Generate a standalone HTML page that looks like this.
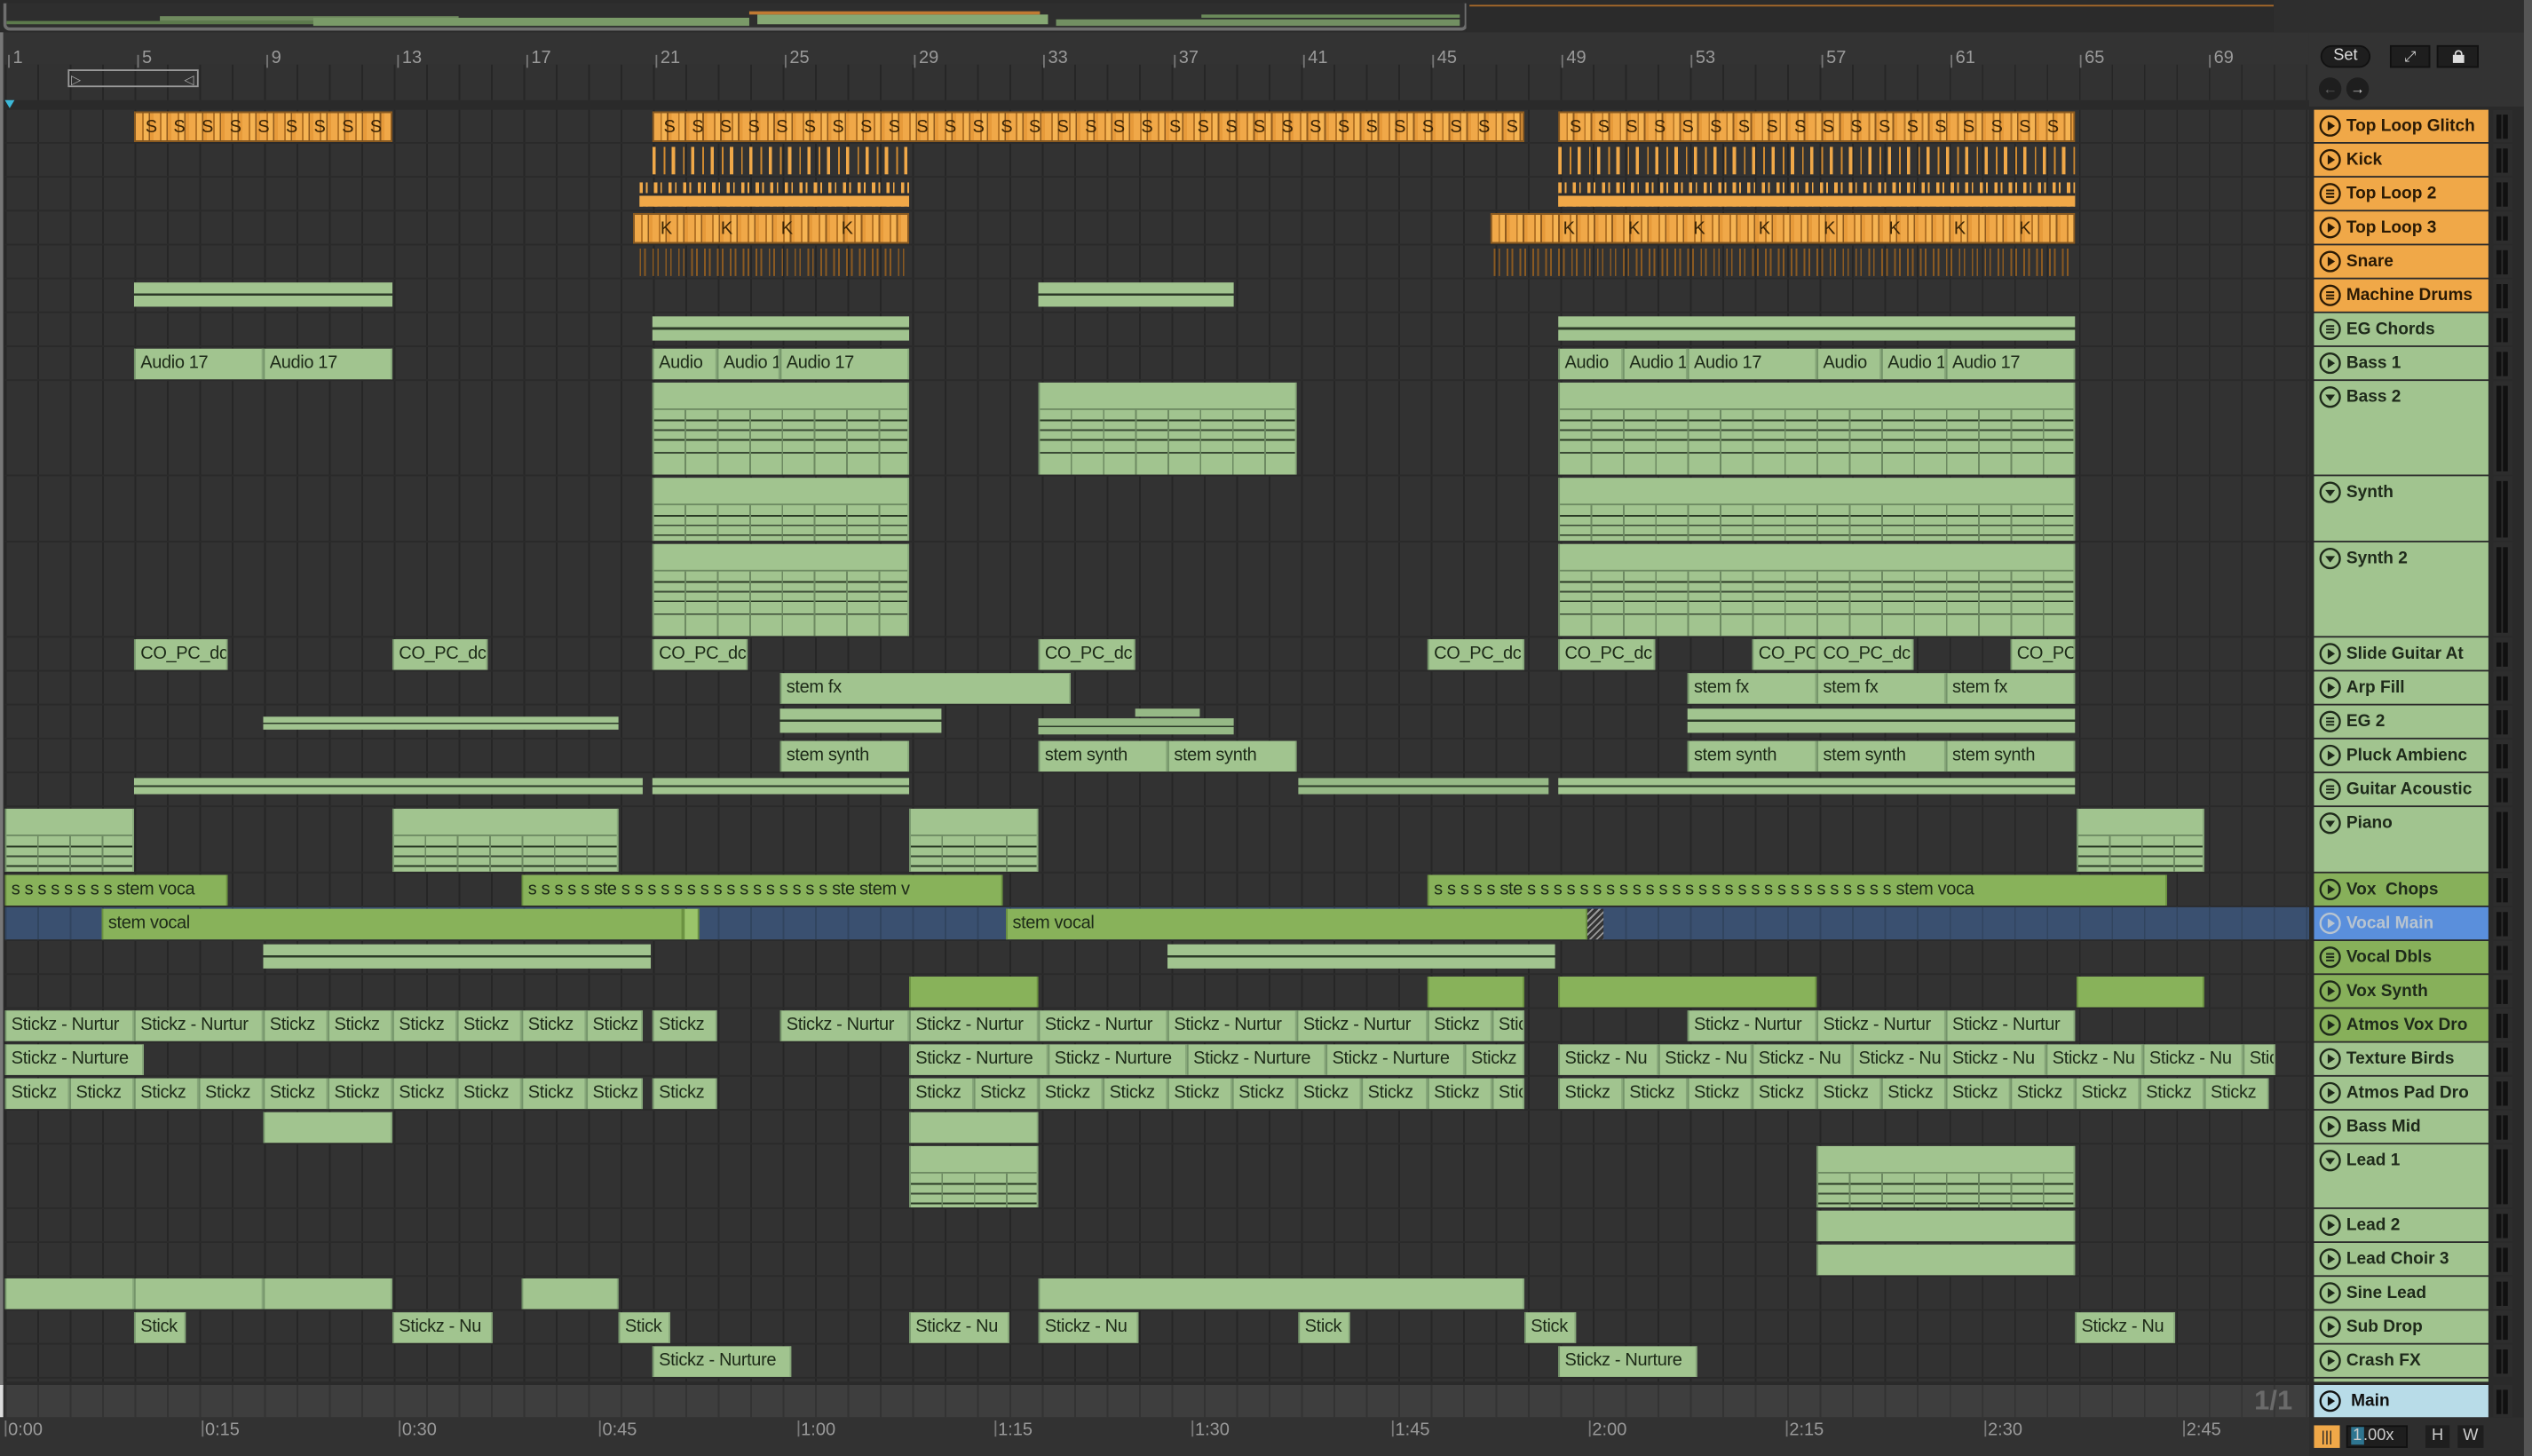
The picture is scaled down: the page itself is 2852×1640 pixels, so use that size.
<!DOCTYPE html>
<html><head><meta charset="utf-8"><style>
*{margin:0;padding:0;box-sizing:border-box}
html,body{width:2852px;height:1640px;overflow:hidden;background:#232323}
.s{position:absolute;left:0;top:0;width:1568px;height:902px;transform:scale(1.81888,1.81818);transform-origin:0 0;font-family:"Liberation Sans",sans-serif;background:#2a2a2a}
.r{position:absolute;left:3px;width:1427px;background-color:#323232;background-image:repeating-linear-gradient(90deg,#262626 0 1px,transparent 1px 20.07px)}
.c{position:absolute;top:1px;bottom:0;background:#a1c48f;border-left:1px solid #74946a;border-right:1px solid #87a77a;color:#1d2a18;font-size:11px;line-height:18px;padding-left:3px;white-space:nowrap;overflow:hidden;font-family:"Liberation Sans",sans-serif;letter-spacing:-.2px}
.b{background:#88b25a;border-color:#6a9040}
.st{top:2px;bottom:auto;height:15px;background:linear-gradient(#a1c48f 0 45%,#2c3a28 45% 55%,#a1c48f 55%);border:none}
.st2{background:linear-gradient(#96b986 0 45%,#2c3a28 45% 55%,#96b986 55%)}
.o{background:repeating-linear-gradient(90deg,#f0a848 0 4px,#b57426 4px 5px,#f5b352 5px 8px,#8e5a1e 8px 9px,#e69a3a 9px 11px);border:1px solid #8a5a20;color:#3a2406;font-size:11px;letter-spacing:3.5px;padding-left:6px}
.k{top:2px;bottom:1px;background:repeating-linear-gradient(90deg,#f0a848 0 2px,transparent 2px 7px,#d08a30 7px 8px,transparent 8px 12px);border:none}
.tl2{top:3px;bottom:auto;height:15px;background:linear-gradient(transparent 0 45%,#2c2c2c 45% 55%,#f0a848 55% 100%),repeating-linear-gradient(90deg,#f0a848 0 2px,transparent 2px 4px,#f0a848 4px 5px,transparent 5px 9px);border:none}
.sn{top:2px;bottom:1px;background:repeating-linear-gradient(90deg,#8a5a22 0 1px,transparent 1px 3px,#8a5a22 3px 4px,transparent 4px 8px);border:none}
.md{background:#a1c48f}
.md:after{content:"";position:absolute;left:0;right:0;top:16px;bottom:0;border-top:1px solid #6d8a62;background:repeating-linear-gradient(90deg,transparent 0 19px,#6d8a62 19px 20px),linear-gradient(transparent 6px,#2a3a25 6px 7px,transparent 7px 12px,#3a4a35 12px 13px,transparent 13px 18px,#2a3a25 18px 19px,transparent 19px 26px,#3a4a35 26px 27px,transparent 27px)}
.h{position:absolute;left:1430px;width:108px;top:0;bottom:0;background:#a1c48f;color:#1e2a1a;font-weight:bold;font-size:10.5px;line-height:20px;padding-left:20px;white-space:nowrap;overflow:hidden;font-family:"Liberation Sans",sans-serif}
.h.o2{background:#f0a848;color:#2a1a05}
.h.b2{background:#87b05a}
.h svg{position:absolute;left:3px;top:3px;width:14px;height:14px}
.m{position:absolute;left:1541px;width:12px;top:0;bottom:0;background:#2d2d2d}
.m:before,.m:after{content:"";position:absolute;top:3px;bottom:2px;width:3px;background:#111;left:2px}
.m:after{left:6px}
.gap{position:absolute;left:1427px;width:3px;top:0;bottom:0;background:#2a2a2a}
.tk{position:absolute;top:30px;font-size:11px;color:#9a9a9a}
.tk:before{content:"";position:absolute;left:-3px;top:4px;width:1px;height:8px;background:#777}
.tm{position:absolute;top:880px;font-size:11px;color:#999}
.tm:before{content:"";position:absolute;left:-2px;top:0;width:1px;height:10px;background:#777}
</style></head><body><div class="s">
<svg width="0" height="0" style="position:absolute"><defs>
<g id="pl"><circle cx="7" cy="7" r="6" fill="none" stroke="currentColor" stroke-width="1.3"/><path d="M5.5 4 L10 7 L5.5 10 Z" fill="currentColor"/></g>
<g id="ls"><circle cx="7" cy="7" r="6" fill="none" stroke="currentColor" stroke-width="1.3"/><path d="M4.5 5h5M4.5 7h5M4.5 9h5" stroke="currentColor" stroke-width="1.1"/></g>
<g id="dn"><circle cx="7" cy="7" r="6" fill="none" stroke="currentColor" stroke-width="1.3"/><path d="M4 5.5 L10 5.5 L7 9.5 Z" fill="currentColor"/></g>
</defs></svg>

<!-- overview -->
<div style="position:absolute;left:0;top:0;width:1568px;height:20px;background:#2b2b2b"></div>
<div style="position:absolute;left:2px;top:2px;width:907px;height:17px;border:2px solid #6e6e6e;border-top:none;border-radius:0 0 4px 4px;background:#2e2e2e;overflow:hidden">
<div style="position:absolute;left:95px;top:8px;width:185px;height:3px;background:#6f8a5e"></div>
<div style="position:absolute;left:0;top:11px;width:460px;height:2px;background:#5c7a4c"></div>
<div style="position:absolute;left:190px;top:9px;width:270px;height:5px;background:#7a9a68"></div>
<div style="position:absolute;left:465px;top:7px;width:180px;height:6px;background:#86a874"></div>
<div style="position:absolute;left:460px;top:5px;width:180px;height:2px;background:#c07a32"></div>
<div style="position:absolute;left:650px;top:10px;width:250px;height:4px;background:#728f62"></div>
<div style="position:absolute;left:740px;top:7px;width:160px;height:2px;background:#6b8a5a"></div>
</div>
<div style="position:absolute;left:908px;top:0;width:660px;height:20px;background:#2b2b2b"></div>
<div style="position:absolute;left:910px;top:3px;width:520px;height:1px;background:#a86a2a"></div>
<div style="position:absolute;left:1408px;top:0;width:160px;height:20px;background:#2e2e2e;border-top-right-radius:5px;border-right:3px solid #555"></div>

<!-- ruler -->
<div style="position:absolute;left:2px;top:20px;width:1428px;height:42px;background:#333"></div>
<div style="position:absolute;left:3px;top:40px;width:1427px;height:22px;background-color:#323232;background-image:repeating-linear-gradient(90deg,#262626 0 1px,transparent 1px 20.07px)"></div>
<div class="tk" style="left:8px">1</div><div class="tk" style="left:88px">5</div><div class="tk" style="left:168px">9</div><div class="tk" style="left:249px">13</div><div class="tk" style="left:329px">17</div><div class="tk" style="left:409px">21</div><div class="tk" style="left:489px">25</div><div class="tk" style="left:569px">29</div><div class="tk" style="left:649px">33</div><div class="tk" style="left:730px">37</div><div class="tk" style="left:810px">41</div><div class="tk" style="left:890px">45</div><div class="tk" style="left:970px">49</div><div class="tk" style="left:1050px">53</div><div class="tk" style="left:1131px">57</div><div class="tk" style="left:1211px">61</div><div class="tk" style="left:1291px">65</div><div class="tk" style="left:1371px">69</div>
<div style="position:absolute;left:42px;top:43px;width:81px;height:11px;border:1px solid #9a9a9a"></div>
<div style="position:absolute;left:44px;top:45px;font-size:8px;color:#aaa">▷</div><div style="position:absolute;left:114px;top:45px;font-size:8px;color:#aaa">◁</div>
<div style="position:absolute;left:3px;top:62px;width:0;height:0;border-left:3px solid transparent;border-right:3px solid transparent;border-top:5px solid #3cb8d8"></div>
<!-- right panel top -->
<div style="position:absolute;left:1430px;top:20px;width:138px;height:46px;background:#333"></div>
<div style="position:absolute;left:1437px;top:28px;width:31px;height:14px;border-radius:7px;background:#1e1e1e;border:1px solid #111;color:#ddd;font-size:10px;text-align:center;line-height:12px">Set</div>
<div style="position:absolute;left:1480px;top:28px;width:25px;height:14px;background:#1e1e1e;border:1px solid #111;color:#ddd;font-size:9px;text-align:center;line-height:12px">⤢</div>
<div style="position:absolute;left:1509px;top:28px;width:26px;height:14px;background:#1e1e1e;border:1px solid #111"><div style="position:absolute;left:9px;top:5px;width:7px;height:5px;background:#ddd"></div><div style="position:absolute;left:10px;top:2px;width:5px;height:5px;border:1px solid #ddd;border-bottom:none;border-radius:3px 3px 0 0"></div></div>
<div style="position:absolute;left:1436px;top:48px;width:14px;height:14px;border-radius:7px;background:#1e1e1e;color:#666;font-size:9px;text-align:center;line-height:14px">←</div>
<div style="position:absolute;left:1453px;top:48px;width:14px;height:14px;border-radius:7px;background:#1e1e1e;color:#ddd;font-size:9px;text-align:center;line-height:14px">→</div>
<div style="position:absolute;left:0;top:20px;width:2px;height:840px;background:#777"></div>

<!-- rows -->
<div class="r" style="top:68px;height:20px"><div class="c o" style="left:80px;width:160px">S S S S S S S S S S S</div><div class="c o" style="left:401px;width:540px">S S S S S S S S S S S S S S S S S S S S S S S S S S S S S S S S S S S S S</div><div class="c o" style="left:962px;width:320px">S S S S S S S S S S S S S S S S S S S S S S</div><div class="gap"></div><div class="h o2"><svg style="color:#2a1a05"><use href="#pl"/></svg>Top Loop Glitch</div><div class="m"></div></div>
<div class="r" style="top:89px;height:20px"><div class="c k" style="left:401px;width:159px"></div><div class="c k" style="left:962px;width:320px"></div><div class="gap"></div><div class="h o2"><svg style="color:#2a1a05"><use href="#pl"/></svg>Kick</div><div class="m"></div></div>
<div class="r" style="top:110px;height:20px"><div class="c tl2" style="left:393px;width:167px"></div><div class="c tl2" style="left:962px;width:320px"></div><div class="gap"></div><div class="h o2"><svg style="color:#2a1a05"><use href="#ls"/></svg>Top Loop 2</div><div class="m"></div></div>
<div class="r" style="top:131px;height:20px"><div class="c o" style="left:389px;width:171px;letter-spacing:30px;padding-left:16px">KKKK</div><div class="c o" style="left:920px;width:362px;letter-spacing:33px;padding-left:44px">KKKKKKKK</div><div class="gap"></div><div class="h o2"><svg style="color:#2a1a05"><use href="#pl"/></svg>Top Loop 3</div><div class="m"></div></div>
<div class="r" style="top:152px;height:20px"><div class="c sn" style="left:393px;width:167px"></div><div class="c sn" style="left:922px;width:360px"></div><div class="gap"></div><div class="h o2"><svg style="color:#2a1a05"><use href="#pl"/></svg>Snare</div><div class="m"></div></div>
<div class="r" style="top:173px;height:20px"><div class="c st" style="left:80px;width:160px"></div><div class="c st" style="left:640px;width:121px"></div><div class="gap"></div><div class="h o2"><svg style="color:#2a1a05"><use href="#ls"/></svg>Machine Drums</div><div class="m"></div></div>
<div class="r" style="top:194px;height:20px"><div class="c st" style="left:401px;width:159px"></div><div class="c st" style="left:962px;width:320px"></div><div class="gap"></div><div class="h"><svg style="color:#1e2a1a"><use href="#ls"/></svg>EG Chords</div><div class="m"></div></div>
<div class="r" style="top:215px;height:20px"><div class="c" style="left:80px;width:80px">Audio 17</div><div class="c" style="left:160px;width:80px">Audio 17</div><div class="c" style="left:401px;width:40px">Audio</div><div class="c" style="left:441px;width:39px">Audio 1</div><div class="c" style="left:480px;width:80px">Audio 17</div><div class="c" style="left:962px;width:40px">Audio</div><div class="c" style="left:1002px;width:40px">Audio 1</div><div class="c" style="left:1042px;width:80px">Audio 17</div><div class="c" style="left:1122px;width:40px">Audio</div><div class="c" style="left:1162px;width:40px">Audio 1</div><div class="c" style="left:1202px;width:80px">Audio 17</div><div class="gap"></div><div class="h"><svg style="color:#1e2a1a"><use href="#pl"/></svg>Bass 1</div><div class="m"></div></div>
<div class="r" style="top:236px;height:58px"><div class="c md" style="left:401px;width:159px"></div><div class="c md" style="left:640px;width:160px"></div><div class="c md" style="left:962px;width:320px"></div><div class="gap"></div><div class="h"><svg style="color:#1e2a1a"><use href="#dn"/></svg>Bass 2</div><div class="m"></div></div>
<div class="r" style="top:295px;height:40px"><div class="c md" style="left:401px;width:159px"></div><div class="c md" style="left:962px;width:320px"></div><div class="gap"></div><div class="h"><svg style="color:#1e2a1a"><use href="#dn"/></svg>Synth</div><div class="m"></div></div>
<div class="r" style="top:336px;height:58px"><div class="c md" style="left:401px;width:159px"></div><div class="c md" style="left:962px;width:320px"></div><div class="gap"></div><div class="h"><svg style="color:#1e2a1a"><use href="#dn"/></svg>Synth 2</div><div class="m"></div></div>
<div class="r" style="top:395px;height:20px"><div class="c" style="left:80px;width:58px">CO_PC_dc</div><div class="c" style="left:240px;width:59px">CO_PC_dc</div><div class="c" style="left:401px;width:59px">CO_PC_dc</div><div class="c" style="left:640px;width:60px">CO_PC_dc</div><div class="c" style="left:881px;width:60px">CO_PC_dc</div><div class="c" style="left:962px;width:60px">CO_PC_dc</div><div class="c" style="left:1082px;width:40px">CO_PC</div><div class="c" style="left:1122px;width:60px">CO_PC_dc</div><div class="c" style="left:1242px;width:40px">CO_PC</div><div class="gap"></div><div class="h"><svg style="color:#1e2a1a"><use href="#pl"/></svg>Slide Guitar At</div><div class="m"></div></div>
<div class="r" style="top:416px;height:20px"><div class="c" style="left:480px;width:180px">stem fx</div><div class="c" style="left:1042px;width:80px">stem fx</div><div class="c" style="left:1122px;width:80px">stem fx</div><div class="c" style="left:1202px;width:80px">stem fx</div><div class="gap"></div><div class="h"><svg style="color:#1e2a1a"><use href="#pl"/></svg>Arp Fill</div><div class="m"></div></div>
<div class="r" style="top:437px;height:20px"><div class="c st" style="left:160px;width:220px;top:7px;height:8px"></div><div class="c st" style="left:480px;width:100px"></div><div class="c st st2" style="left:640px;width:121px;top:8px;height:10px"></div><div class="c st" style="left:700px;width:40px;top:2px;height:5px;background:#96b986"></div><div class="c st" style="left:1042px;width:240px"></div><div class="gap"></div><div class="h"><svg style="color:#1e2a1a"><use href="#ls"/></svg>EG 2</div><div class="m"></div></div>
<div class="r" style="top:458px;height:20px"><div class="c" style="left:480px;width:80px">stem synth</div><div class="c" style="left:640px;width:80px">stem synth</div><div class="c" style="left:720px;width:80px">stem synth</div><div class="c" style="left:1042px;width:80px">stem synth</div><div class="c" style="left:1122px;width:80px">stem synth</div><div class="c" style="left:1202px;width:80px">stem synth</div><div class="gap"></div><div class="h"><svg style="color:#1e2a1a"><use href="#pl"/></svg>Pluck Ambienc</div><div class="m"></div></div>
<div class="r" style="top:479px;height:20px"><div class="c st" style="left:80px;width:315px;top:3px;height:10px"></div><div class="c st" style="left:401px;width:159px;top:3px;height:10px"></div><div class="c st st2" style="left:801px;width:155px;top:3px;height:10px"></div><div class="c st" style="left:962px;width:320px;top:3px;height:10px"></div><div class="gap"></div><div class="h"><svg style="color:#1e2a1a"><use href="#ls"/></svg>Guitar Acoustic</div><div class="m"></div></div>
<div class="r" style="top:500px;height:40px"><div class="c md" style="left:0;width:80px"></div><div class="c md" style="left:240px;width:140px"></div><div class="c md" style="left:560px;width:80px"></div><div class="c md" style="left:1283px;width:79px"></div><div class="gap"></div><div class="h"><svg style="color:#1e2a1a"><use href="#dn"/></svg>Piano</div><div class="m"></div></div>
<div class="r" style="top:541px;height:20px"><div class="c b" style="left:0;width:138px">s s s s s s s s stem voca</div><div class="c b" style="left:320px;width:298px">s s s s s ste s s s s s s s s s s s s s s s s ste stem v</div><div class="c b" style="left:881px;width:458px">s s s s s ste s s s s s s s s s s s s s s s s s s s s s s s s s s s s stem voca</div><div class="gap"></div><div class="h b2"><svg style="color:#1e2a1a"><use href="#pl"/></svg>Vox&nbsp; Chops</div><div class="m"></div></div>
<div class="r" style="top:562px;height:20px;background-color:#3a5070;background-image:repeating-linear-gradient(90deg,#31455f 0 1px,transparent 1px 20.07px)"><div class="c b" style="left:60px;width:360px">stem vocal</div><div class="c b" style="left:420px;width:10px;background:#9ac46a"></div><div class="c b" style="left:620px;width:360px">stem vocal</div><div class="c" style="left:980px;width:10px;background:repeating-linear-gradient(135deg,#333 0 2px,#999 2px 3px);border:none"></div><div class="gap"></div><div class="h" style="background:#5a8fdc;color:#b8c4d0"><svg style="color:#b8c4d0"><use href="#pl"/></svg>Vocal Main</div><div class="m"></div></div>
<div class="r" style="top:583px;height:20px"><div class="c st" style="left:160px;width:240px"></div><div class="c st" style="left:720px;width:240px"></div><div class="gap"></div><div class="h b2"><svg style="color:#1e2a1a"><use href="#ls"/></svg>Vocal Dbls</div><div class="m"></div></div>
<div class="r" style="top:604px;height:20px"><div class="c b" style="left:560px;width:80px"></div><div class="c b" style="left:881px;width:60px"></div><div class="c b" style="left:962px;width:160px"></div><div class="c b" style="left:1283px;width:79px"></div><div class="gap"></div><div class="h b2"><svg style="color:#1e2a1a"><use href="#pl"/></svg>Vox Synth</div><div class="m"></div></div>
<div class="r" style="top:625px;height:20px"><div class="c" style="left:0;width:80px">Stickz - Nurtur</div><div class="c" style="left:80px;width:80px">Stickz - Nurtur</div><div class="c" style="left:160px;width:40px">Stickz</div><div class="c" style="left:200px;width:40px">Stickz</div><div class="c" style="left:240px;width:40px">Stickz</div><div class="c" style="left:280px;width:40px">Stickz</div><div class="c" style="left:320px;width:40px">Stickz</div><div class="c" style="left:360px;width:35px">Stickz</div><div class="c" style="left:401px;width:40px">Stickz</div><div class="c" style="left:480px;width:80px">Stickz - Nurtur</div><div class="c" style="left:560px;width:80px">Stickz - Nurtur</div><div class="c" style="left:640px;width:80px">Stickz - Nurtur</div><div class="c" style="left:720px;width:80px">Stickz - Nurtur</div><div class="c" style="left:800px;width:81px">Stickz - Nurtur</div><div class="c" style="left:881px;width:40px">Stickz</div><div class="c" style="left:921px;width:20px">Stic</div><div class="c" style="left:1042px;width:80px">Stickz - Nurtur</div><div class="c" style="left:1122px;width:80px">Stickz - Nurtur</div><div class="c" style="left:1202px;width:80px">Stickz - Nurtur</div><div class="gap"></div><div class="h b2"><svg style="color:#1e2a1a"><use href="#pl"/></svg>Atmos Vox Dro</div><div class="m"></div></div>
<div class="r" style="top:646px;height:20px"><div class="c" style="left:0;width:86px">Stickz - Nurture</div><div class="c" style="left:560px;width:86px">Stickz - Nurture</div><div class="c" style="left:646px;width:86px">Stickz - Nurture</div><div class="c" style="left:732px;width:86px">Stickz - Nurture</div><div class="c" style="left:818px;width:86px">Stickz - Nurture</div><div class="c" style="left:904px;width:37px">Stickz</div><div class="c" style="left:962px;width:62px">Stickz - Nu</div><div class="c" style="left:1024px;width:58px">Stickz - Nu</div><div class="c" style="left:1082px;width:62px">Stickz - Nu</div><div class="c" style="left:1144px;width:58px">Stickz - Nu</div><div class="c" style="left:1202px;width:62px">Stickz - Nu</div><div class="c" style="left:1264px;width:60px">Stickz - Nu</div><div class="c" style="left:1324px;width:62px">Stickz - Nu</div><div class="c" style="left:1386px;width:20px">Stic</div><div class="gap"></div><div class="h"><svg style="color:#1e2a1a"><use href="#pl"/></svg>Texture Birds</div><div class="m"></div></div>
<div class="r" style="top:667px;height:20px"><div class="c" style="left:0;width:40px">Stickz</div><div class="c" style="left:40px;width:40px">Stickz</div><div class="c" style="left:80px;width:40px">Stickz</div><div class="c" style="left:120px;width:40px">Stickz</div><div class="c" style="left:160px;width:40px">Stickz</div><div class="c" style="left:200px;width:40px">Stickz</div><div class="c" style="left:240px;width:40px">Stickz</div><div class="c" style="left:280px;width:40px">Stickz</div><div class="c" style="left:320px;width:40px">Stickz</div><div class="c" style="left:360px;width:35px">Stickz</div><div class="c" style="left:401px;width:40px">Stickz</div><div class="c" style="left:560px;width:40px">Stickz</div><div class="c" style="left:600px;width:40px">Stickz</div><div class="c" style="left:640px;width:40px">Stickz</div><div class="c" style="left:680px;width:40px">Stickz</div><div class="c" style="left:720px;width:40px">Stickz</div><div class="c" style="left:760px;width:40px">Stickz</div><div class="c" style="left:800px;width:40px">Stickz</div><div class="c" style="left:840px;width:41px">Stickz</div><div class="c" style="left:881px;width:40px">Stickz</div><div class="c" style="left:921px;width:20px">Stic</div><div class="c" style="left:962px;width:40px">Stickz</div><div class="c" style="left:1002px;width:40px">Stickz</div><div class="c" style="left:1042px;width:40px">Stickz</div><div class="c" style="left:1082px;width:40px">Stickz</div><div class="c" style="left:1122px;width:40px">Stickz</div><div class="c" style="left:1162px;width:40px">Stickz</div><div class="c" style="left:1202px;width:40px">Stickz</div><div class="c" style="left:1242px;width:40px">Stickz</div><div class="c" style="left:1282px;width:40px">Stickz</div><div class="c" style="left:1322px;width:40px">Stickz</div><div class="c" style="left:1362px;width:40px">Stickz</div><div class="gap"></div><div class="h"><svg style="color:#1e2a1a"><use href="#pl"/></svg>Atmos Pad Dro</div><div class="m"></div></div>
<div class="r" style="top:688px;height:20px"><div class="c" style="left:160px;width:80px"></div><div class="c" style="left:560px;width:80px"></div><div class="gap"></div><div class="h"><svg style="color:#1e2a1a"><use href="#pl"/></svg>Bass Mid</div><div class="m"></div></div>
<div class="r" style="top:709px;height:39px"><div class="c md" style="left:560px;width:80px"></div><div class="c md" style="left:1122px;width:160px"></div><div class="gap"></div><div class="h"><svg style="color:#1e2a1a"><use href="#dn"/></svg>Lead 1</div><div class="m"></div></div>
<div class="r" style="top:749px;height:20px"><div class="c" style="left:1122px;width:160px"></div><div class="gap"></div><div class="h"><svg style="color:#1e2a1a"><use href="#pl"/></svg>Lead 2</div><div class="m"></div></div>
<div class="r" style="top:770px;height:20px"><div class="c" style="left:1122px;width:160px"></div><div class="gap"></div><div class="h"><svg style="color:#1e2a1a"><use href="#pl"/></svg>Lead Choir 3</div><div class="m"></div></div>
<div class="r" style="top:791px;height:20px"><div class="c" style="left:0;width:80px"></div><div class="c" style="left:80px;width:80px"></div><div class="c" style="left:160px;width:80px"></div><div class="c" style="left:320px;width:60px"></div><div class="c" style="left:640px;width:301px"></div><div class="gap"></div><div class="h"><svg style="color:#1e2a1a"><use href="#pl"/></svg>Sine Lead</div><div class="m"></div></div>
<div class="r" style="top:812px;height:20px"><div class="c" style="left:80px;width:32px">Stick</div><div class="c" style="left:240px;width:62px">Stickz - Nu</div><div class="c" style="left:380px;width:32px">Stick</div><div class="c" style="left:560px;width:62px">Stickz - Nu</div><div class="c" style="left:640px;width:62px">Stickz - Nu</div><div class="c" style="left:801px;width:32px">Stick</div><div class="c" style="left:941px;width:32px">Stick</div><div class="c" style="left:1282px;width:62px">Stickz - Nu</div><div class="gap"></div><div class="h"><svg style="color:#1e2a1a"><use href="#pl"/></svg>Sub Drop</div><div class="m"></div></div>
<div class="r" style="top:833px;height:20px"><div class="c" style="left:401px;width:86px">Stickz - Nurture</div><div class="c" style="left:962px;width:86px">Stickz - Nurture</div><div class="gap"></div><div class="h"><svg style="color:#1e2a1a"><use href="#pl"/></svg>Crash FX</div><div class="m"></div></div>
<div class="r" style="top:854px;height:2px"><div class="gap"></div><div class="h" style="background:#a1c48f"></div></div>
<!-- main -->
<div class="r" style="top:858px;height:20px;background-color:#3e3e3e;background-image:repeating-linear-gradient(90deg,#333 0 1px,transparent 1px 20.07px)"><div style="position:absolute;left:1393px;top:0;font-size:17px;font-weight:bold;color:#6a6a6a;line-height:20px">1/1</div><div class="gap"></div><div class="h" style="background:#b8dce8;color:#111"><svg style="color:#111"><use href="#pl"/></svg>&nbsp;Main</div><div class="m"></div></div>
<div style="position:absolute;left:0;top:858px;width:2px;height:20px;background:#ddd"></div>
<!-- time ruler -->
<div style="position:absolute;left:0;top:878px;width:1430px;height:24px;background:#323232"></div>
<div class="tm" style="left:5px">0:00</div><div class="tm" style="left:127px">0:15</div><div class="tm" style="left:249px">0:30</div><div class="tm" style="left:373px">0:45</div><div class="tm" style="left:496px">1:00</div><div class="tm" style="left:618px">1:15</div><div class="tm" style="left:740px">1:30</div><div class="tm" style="left:864px">1:45</div><div class="tm" style="left:986px">2:00</div><div class="tm" style="left:1108px">2:15</div><div class="tm" style="left:1231px">2:30</div><div class="tm" style="left:1354px">2:45</div>
<div style="position:absolute;left:1430px;top:878px;width:138px;height:24px;background:#2e2e2e"></div>
<div style="position:absolute;left:1433px;top:883px;width:16px;height:14px;background:#f0a848;color:#222;font-size:9px;text-align:center;line-height:14px">|||</div>
<div style="position:absolute;left:1453px;top:883px;width:38px;height:14px;background:#1e1e1e;border:1px solid #111;color:#ccc;font-size:10px;line-height:12px;padding-left:2px"><span style="background:#2e7590;padding:0 1px">1</span>.00x</div>
<div style="position:absolute;left:1502px;top:883px;width:15px;height:14px;background:#1e1e1e;color:#ccc;font-size:10px;text-align:center;line-height:14px">H</div>
<div style="position:absolute;left:1522px;top:883px;width:16px;height:14px;background:#1e1e1e;color:#ccc;font-size:10px;text-align:center;line-height:14px">W</div>
<div style="position:absolute;left:1563px;top:0;width:5px;height:902px;background:#555"></div>
</div></body></html>
